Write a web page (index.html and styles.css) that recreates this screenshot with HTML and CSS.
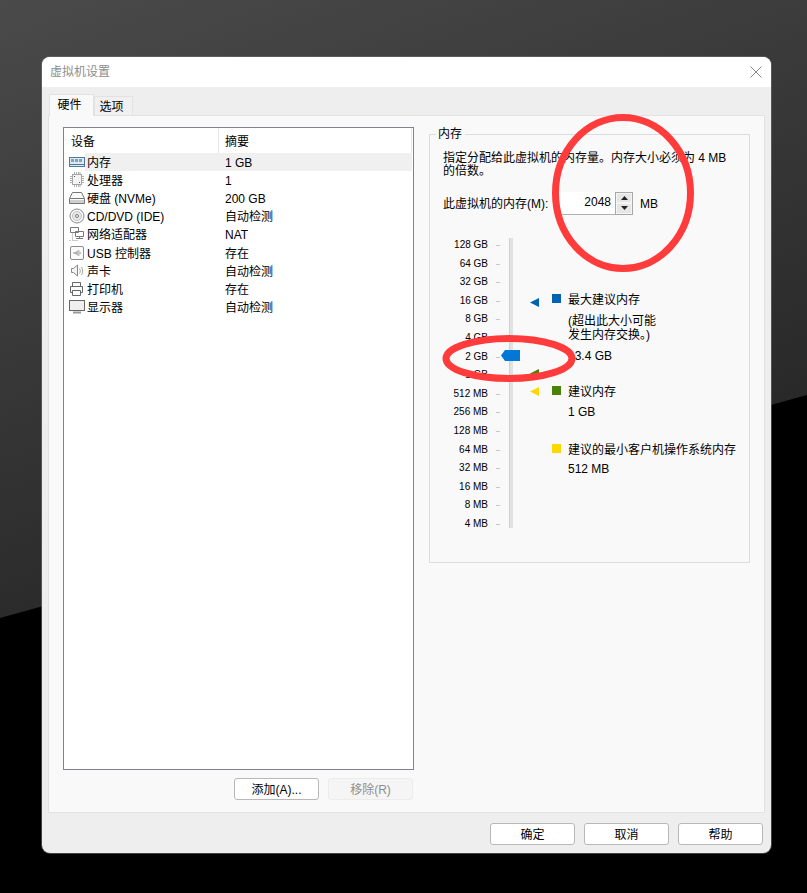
FILE: index.html
```html
<!DOCTYPE html>
<html lang="zh">
<head>
<meta charset="utf-8">
<title>虚拟机设置</title>
<link rel="stylesheet" href="styles.css">
</head>
<body>
<div class="dialog">
  <header class="titlebar">
    <span class="title">虚拟机设置</span>
    <svg class="close" width="12" height="12" viewBox="0 0 12 12"><path d="M.5.5l11 11M11.5.5l-11 11" stroke="#8a8a8a" fill="none"/></svg>
  </header>
  <div class="body">
    <div class="tabs">
      <div class="tab active">硬件</div>
      <div class="tab">选项</div>
    </div>
    <div class="panel">
      <div class="left">
        <div class="list">
          <div class="list-head"><div class="col-a">设备</div><div class="col-b">摘要</div></div>
          <div class="row selected">
            <svg class="ico" width="18" height="14" viewBox="0 0 18 14"><rect x=".5" y="2.5" width="15" height="9" fill="#dfe8f0" stroke="#4f7a9c"/><path d="M2 4h3v3H2zM6 4h3v3H6zM10 4h3v3h-3z" fill="#7ea3bf"/><path d="M1 9.500h14" stroke="#4f7a9c"/></svg>
            <span class="name">内存</span><span class="val">1 GB</span>
          </div>
          <div class="row">
            <svg class="ico" width="18" height="16" viewBox="0 0 18 16"><rect x="3.500" y="2.500" width="9" height="10" fill="#f4f4f4" stroke="#a5a5a5"/><path d="M1 4.500h2M1 6.500h2M1 8.500h2M1 10.500h2M13 4.500h2M13 6.500h2M13 8.500h2M13 10.500h2M5.500 0v2M7.500 0v2M9.500 0v2M11 0v2M5.500 13v2M7.500 13v2M9.500 13v2M11 13v2" stroke="#b0b0b0"/><path d="M5 4h1v1H5zM10 10h1v1h-1z" fill="#555"/></svg>
            <span class="name">处理器</span><span class="val">1</span>
          </div>
          <div class="row">
            <svg class="ico" width="18" height="16" viewBox="0 0 18 16"><path d="M3.500 2.500h9l3 6v5h-15v-5z" fill="#fafafa" stroke="#777"/><path d="M1 8.500h14" stroke="#777"/><path d="M1 10h14v3H1z" fill="#cfcfcf"/></svg>
            <span class="name">硬盘 (NVMe)</span><span class="val">200 GB</span>
          </div>
          <div class="row">
            <svg class="ico" width="18" height="16" viewBox="0 0 18 16"><circle cx="8" cy="8" r="7" fill="#f6f6f6" stroke="#8c8c8c"/><circle cx="8" cy="8" r="4.500" fill="#e8e8e8" stroke="#c4c4c4"/><circle cx="8" cy="8" r="1.500" fill="#fff" stroke="#777"/></svg>
            <span class="name">CD/DVD (IDE)</span><span class="val">自动检测</span>
          </div>
          <div class="row">
            <svg class="ico" width="18" height="16" viewBox="0 0 18 16"><path d="M1.500 1.500h8v5h-8zM6.500 5.500h8v5h-8z" fill="#fff" stroke="#777"/><path d="M10.500 10.500v2M7 12.500h7" stroke="#777" fill="none"/><path d="M3.500 6.500v8h5M.5 14.500h2" stroke="#999" stroke-dasharray="1 1" fill="none"/></svg>
            <span class="name">网络适配器</span><span class="val">NAT</span>
          </div>
          <div class="row">
            <svg class="ico" width="18" height="16" viewBox="0 0 18 16"><rect x="1.500" y="1.500" width="13" height="13" rx="1.500" fill="#fafafa" stroke="#8c8c8c"/><path d="M4 8h8M6.500 8l2-2h2M6.500 8l2 2h2" stroke="#8c8c8c" fill="none"/></svg>
            <span class="name">USB 控制器</span><span class="val">存在</span>
          </div>
          <div class="row">
            <svg class="ico" width="18" height="16" viewBox="0 0 18 16"><path d="M2.500 5.500h2l4-3.500v11l-4-3.500h-2z" fill="#f4f4f4" stroke="#888"/><path d="M10.500 5.500c1 1.500 1 3.500 0 5M12.500 4c1.500 2.500 1.500 5.500 0 8" stroke="#aaa" fill="none"/></svg>
            <span class="name">声卡</span><span class="val">自动检测</span>
          </div>
          <div class="row">
            <svg class="ico" width="18" height="16" viewBox="0 0 18 16"><path d="M3.500 5.500v-4h8v4M3.500 11.500h-2v-6h12v6h-2" fill="#fafafa" stroke="#666"/><path d="M3.500 9.500h8v5h-8z" fill="#fff" stroke="#666"/></svg>
            <span class="name">打印机</span><span class="val">存在</span>
          </div>
          <div class="row">
            <svg class="ico" width="18" height="16" viewBox="0 0 18 16"><rect x=".5" y="1.500" width="15" height="10" fill="#efefef" stroke="#666"/><path d="M4 13.500h8" stroke="#999" stroke-width="2"/></svg>
            <span class="name">显示器</span><span class="val">自动检测</span>
          </div>
        </div>
        <div class="list-actions">
          <button class="btn add">添加(A)...</button>
          <button class="btn remove" disabled>移除(R)</button>
        </div>
      </div>
      <fieldset class="group">
        <legend>内存</legend>
        <p class="desc">指定分配给此虚拟机的内存量。内存大小必须为 4 MB<br>的倍数。</p>
        <div class="mem-row">
          <span class="mem-label">此虚拟机的内存(M):</span>
          <div class="spin">
            <span class="spin-val">2048</span>
            <span class="spin-btns">
              <span class="spin-btn"><svg width="7" height="4" viewBox="0 0 7 4"><path d="M3.500 0L7 4H0z" fill="#222"/></svg></span>
              <span class="spin-btn"><svg width="7" height="4" viewBox="0 0 7 4"><path d="M3.500 4L7 0H0z" fill="#222"/></svg></span>
            </span>
          </div>
          <span class="mem-unit">MB</span>
        </div>
        <div class="scale-area">
          <div class="labels">
            <div class="tick">128 GB</div><div class="tick">64 GB</div><div class="tick">32 GB</div><div class="tick">16 GB</div>
            <div class="tick">8 GB</div><div class="tick">4 GB</div><div class="tick">2 GB</div><div class="tick">1 GB</div>
            <div class="tick">512 MB</div><div class="tick">256 MB</div><div class="tick">128 MB</div><div class="tick">64 MB</div>
            <div class="tick">32 MB</div><div class="tick">16 MB</div><div class="tick">8 MB</div><div class="tick">4 MB</div>
          </div>
          <div class="track"></div>
          <div class="legend">
            <div class="leg-item leg-max">
              <div class="leg-title"><i class="sq blue"></i>最大建议内存</div>
              <div class="leg-note">(超出此大小可能<br>发生内存交换。)</div>
              <div class="leg-val">13.4 GB</div>
            </div>
            <div class="leg-item leg-rec">
              <div class="leg-title"><i class="sq green"></i>建议内存</div>
              <div class="leg-val">1 GB</div>
            </div>
            <div class="leg-item leg-min">
              <div class="leg-title"><i class="sq yellow"></i>建议的最小客户机操作系统内存</div>
              <div class="leg-val">512 MB</div>
            </div>
          </div>
          <svg class="marker m-blue" width="9" height="9" viewBox="0 0 9 9"><path d="M0 4.500L9 0v9z" fill="#0063b1"/></svg>
          <svg class="marker m-green" width="9" height="9" viewBox="0 0 9 9"><path d="M0 4.500L9 0v9z" fill="#498205"/></svg>
          <svg class="marker m-yellow" width="9" height="9" viewBox="0 0 9 9"><path d="M0 4.500L9 0v9z" fill="#ffd800"/></svg>
          <svg class="thumb" width="19" height="11" viewBox="0 0 19 11"><path d="M0 5.500L4 0h15v11H4z" fill="#0078d7"/></svg>
        </div>
      </fieldset>
    </div>
    <div class="footer">
      <button class="btn">确定</button>
      <button class="btn">取消</button>
      <button class="btn">帮助</button>
    </div>
  </div>
</div>
<svg class="annot" width="807" height="893" viewBox="0 0 807 893">
  <ellipse cx="623" cy="193" rx="67.500" ry="75.500" fill="none" stroke="#ff3b3b" stroke-width="7"/>
  <ellipse cx="509" cy="358.500" rx="63" ry="20" fill="none" stroke="#ff3b3b" stroke-width="7"/>
</svg>
</body>
</html>
```
FILE: styles.css
```css
* { box-sizing: border-box; }
html, body { margin: 0; height: 100%; }
body {
  width: 807px;
  height: 893px;
  overflow: hidden;
  position: relative;
  padding: 57px 36px 40px 42px;
  background: linear-gradient(161deg, #4a4a4a, #101010);
  font: 12px/18px "Liberation Sans", "Noto Sans CJK SC", sans-serif;
  color: #000;
}
body::before {
  content: "";
  position: absolute;
  inset: 0;
  background: #000;
  clip-path: polygon(0 618px, 807px 395px, 807px 893px, 0 893px);
}
.dialog {
  position: relative;
  height: 796px;
  border-radius: 8px;
  overflow: hidden;
  background: #eeeeee;
  display: flex;
  flex-direction: column;
  box-shadow: 0 0 0 1px rgba(110, 110, 110, .6);
}
.titlebar {
  height: 30px;
  flex: none;
  background: #fff;
  display: flex;
  align-items: center;
  justify-content: space-between;
  padding: 0 9px 0 8px;
}
.title { color: #8d8d8d; }
.body { flex: 1; display: flex; flex-direction: column; padding: 6px 6px 0; min-height: 0; }
.tabs { display: flex; align-items: flex-end; height: 22px; flex: none; padding-left: 1px; }
.tab {
  width: 39px;
  height: 19px;
  background: #f0f0f0;
  border: 1px solid #e2e2e2;
  border-bottom: 0;
  text-align: center;
  line-height: 21px;
  padding-right: 4px;
}
.tab.active {
  width: 45px;
  height: 22px;
  background: #f9f9f9;
  line-height: 21px;
  margin-bottom: -1px;
  position: relative;
  z-index: 1;
}
.panel {
  height: 698px;
  flex: none;
  background: #f9f9f9;
  border: 1px solid #e2e2e2;
  display: flex;
  padding: 11px 15px 0 14px;
}
.left { width: 351px; flex: none; display: flex; flex-direction: column; }
.list {
  height: 643px;
  background: #fff;
  border: 1px solid #82828c;
  flex: none;
}
.list-head { display: flex; height: 25px; line-height: 29px; }
.col-a { width: 155px; padding-left: 7px; border-right: 1px solid #e6e6e6; }
.col-b { flex: 1; padding-left: 6px; border-right: 1px solid #e6e6e6; margin-right: 1px; }
.row { display: flex; align-items: center; height: 18.100px; padding-left: 5px; margin-right: 1px; }
.row.selected { background: linear-gradient(90deg, #fff 0, #fff 21px, #f0f0f0 21px); }
.ico { flex: none; width: 18px; }
.name { width: 138px; flex: none; padding-top: 2px; }
.val { padding-top: 2px; }
.list-actions { display: flex; justify-content: flex-end; gap: 9px; margin: 8px 1px 0 0; }
.btn {
  width: 85px;
  height: 22px;
  padding: 1px 0 0;
  background: #fff;
  border: 1px solid #b8b8b8;
  border-radius: 3px;
  font: inherit;
  color: #000;
}
.btn.remove { background: #f5f5f5; border-color: #ececec; color: #8e8e8e; }
.group {
  width: 321px;
  height: 435px;
  margin: 1px 0 0 15px;
  padding: 0 0 0 13px;
  border: 1px solid #dcdcdc;
  flex: none;
  min-width: 0;
}
.group legend { padding: 0 3px 0 2px; margin-left: -7px; line-height: 13px; height: 13px; }
.desc { margin: 11px 0 0; line-height: 13px; }
.mem-row { display: flex; align-items: center; height: 24px; margin-top: 14px; }
.mem-label { width: 114px; flex: none; }
.spin {
  width: 76px;
  height: 23px;
  display: flex;
  margin-bottom: 2px;
}
.spin-val { flex: 1; text-align: right; padding-right: 4px; line-height: 21px; background: #fff; border-bottom: 1px solid #b0b0b0; }
.spin-btns {
  width: 18px;
  border: 1px solid #a8a8a8;
  display: flex;
  flex-direction: column;
  background: #e6e6e6;
}
.spin-btn {
  flex: 1;
  display: flex;
  align-items: center;
  justify-content: center;
  border: 1px solid #f4f4f4;
}
.mem-unit { margin-left: 7px; }
.scale-area { position: relative; display: flex; margin-top: 20px; margin-left: -13px; }
.labels { width: 58px; flex: none; }
.tick { height: 18.600px; line-height: 18px; text-align: right; white-space: nowrap; position: relative; font-size: 10px; }
.tick::after { content: ""; position: absolute; left: 66px; top: 9px; width: 4px; height: 1px; background: #c8c8c8; }
.track { width: 4px; height: 290px; margin: 2px 0 0 21px; flex: none; background: #e0e3e3; border-left: 1px solid #d2d2d2; }
.legend { margin: 55px 0 0 55px; flex: 1; }
.leg-title { display: flex; align-items: flex-start; position: relative; line-height: 18px; }
.sq { position: absolute; left: -16px; top: 3px; width: 9px; height: 9px; }
.blue { background: #0063b1; }
.green { background: #498205; }
.yellow { background: #ffd800; }
.leg-note { margin-top: 5px; line-height: 14px; }
.leg-val { margin-top: 1px; line-height: 18px; }
.leg-max .leg-val { margin-top: 5px; }
.leg-rec { margin-top: 18px; }
.leg-rec .leg-val { margin-top: 2px; }
.leg-min { margin-top: 20px; }
.marker, .thumb { position: absolute; }
.marker { left: 100px; }
.m-blue { top: 62px; }
.m-green { top: 133px; }
.m-yellow { top: 151px; }
.thumb { left: 71px; top: 114px; }
.footer { flex: 1; display: flex; justify-content: flex-end; gap: 9px; padding: 10px 2px 0 0; }
.footer .btn { width: 85px; height: 22px; padding-top: 2px; }
.annot { position: absolute; left: 0; top: 0; pointer-events: none; }
```
